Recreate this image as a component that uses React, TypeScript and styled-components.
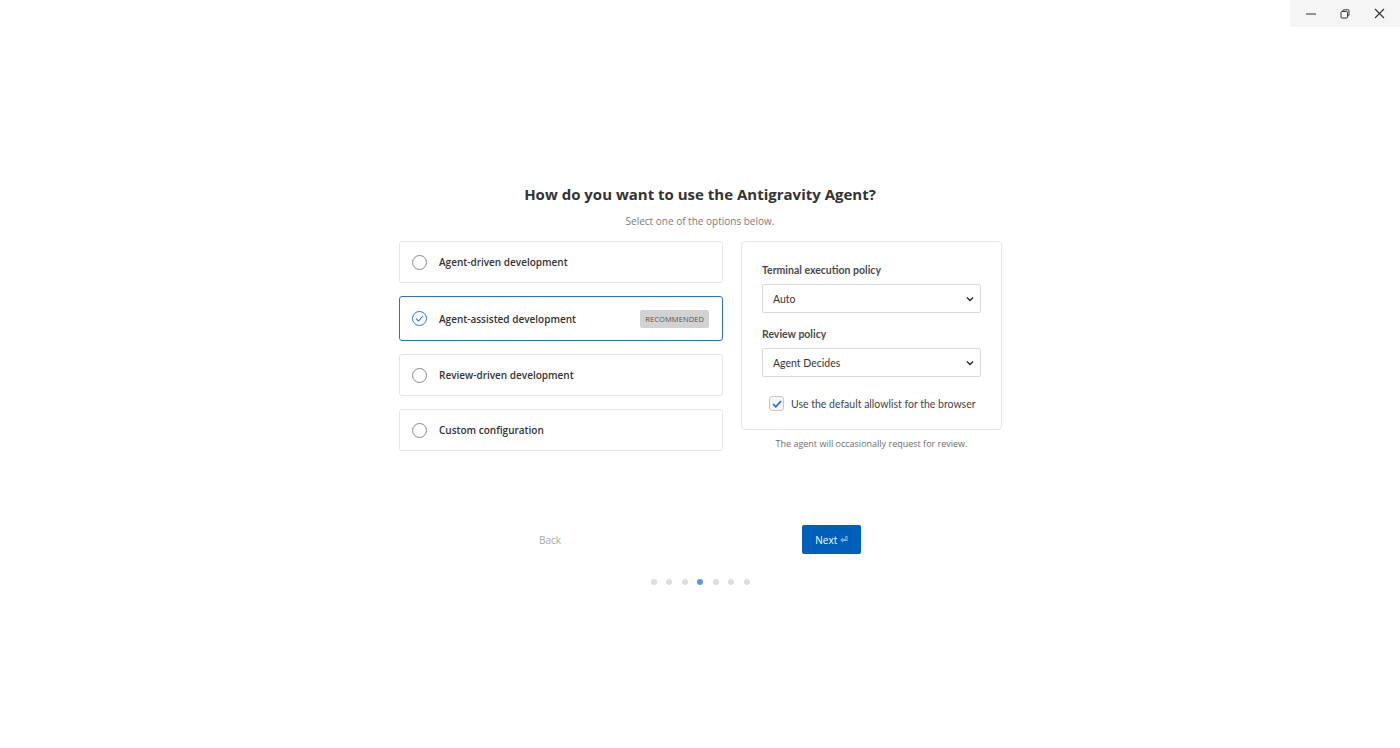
import React, { useState } from "react";
import styled, { createGlobalStyle } from "styled-components";

const GlobalStyle = createGlobalStyle`
  html, body {
    margin: 0;
    padding: 0;
    background: #ffffff;
    font-family: "Open Sans", "Noto Sans", "Liberation Sans", sans-serif;
    color: #333333;
  }
  * { box-sizing: border-box; }
`;

const Page = styled.div`
  width: 1400px;
  height: 748px;
  position: relative;
  overflow: hidden;
  display: flex;
  flex-direction: column;
  align-items: center;
  padding-top: 182px;
`;

// ---- window chrome ----

const WindowControls = styled.div`
  position: absolute;
  top: 0;
  right: 0;
  width: 110px;
  height: 27px;
  background: #f5f5f5;
  display: flex;
  align-items: center;
  justify-content: space-around;
  padding: 0 4px;
`;

const ControlButton = styled.div`
  width: 30px;
  height: 27px;
  display: flex;
  align-items: center;
  justify-content: center;
  color: #333;
`;

// ---- heading ----

const Title = styled.h1`
  margin: 0;
  font-size: 15px;
  font-weight: 700;
  line-height: 24px;
  color: #333333;
`;

const Subtitle = styled.div`
  margin-top: 8px;
  font-size: 10px;
  color: #7a7a7a;
  line-height: 14px;
`;

const Columns = styled.div`
  margin-top: 13px;
  display: flex;
  gap: 18px;
  align-items: flex-start;
  margin-left: 1px;
`;

const OptionList = styled.div`
  width: 324px;
  display: flex;
  flex-direction: column;
  gap: 13px;
`;

const OptionCard = styled.div<{ $selected?: boolean }>`
  height: ${(p) => (p.$selected ? "45px" : "42px")};
  border: 1px solid ${(p) => (p.$selected ? "#2f74c0" : "#e6e6e6")};
  border-radius: 3px;
  background: #fff;
  display: flex;
  align-items: center;
  padding: 0 13px 0 12px;
  cursor: pointer;
`;

const Radio = styled.div<{ $selected?: boolean }>`
  width: 15px;
  height: 15px;
  border-radius: 50%;
  border: 1px solid ${(p) => (p.$selected ? "#2f74c0" : "#8a8a8a")};
  display: flex;
  align-items: center;
  justify-content: center;
  flex-shrink: 0;
`;

const OptionLabel = styled.span`
  margin-left: 12px;
  font-size: 10px;
  font-weight: 600;
  color: #333;
  flex: 1;
`;

const Badge = styled.span`
  background: #d2d2d2;
  color: #555;
  font-size: 7.5px;
  font-weight: 500;
  letter-spacing: 0.1px;
  height: 18px;
  padding: 0 5px;
  display: flex;
  align-items: center;
  border-radius: 2px;
`;

// ---- settings panel ----

const SettingsColumn = styled.div`
  width: 261px;
  display: flex;
  flex-direction: column;
  align-items: center;
`;

const SettingsCard = styled.div`
  width: 100%;
  height: 189px;
  border: 1px solid #e6e6e6;
  border-radius: 4px;
  padding: 21px 20px 0 20px;
  font-family: Lato, "Open Sans", sans-serif;
`;

const FieldLabel = styled.div`
  font-size: 10.5px;
  font-weight: 700;
  color: #4a4a4a;
  line-height: 14px;
  margin-bottom: 7px;
`;

const Select = styled.div<{ $gap?: number }>`
  height: 29px;
  border: 1px solid #d9d9d9;
  border-radius: 2px;
  display: flex;
  align-items: center;
  justify-content: space-between;
  padding: 0 6px 0 10px;
  font-size: 10.5px;
  color: #333;
  margin-bottom: ${(p) => p.$gap ?? 0}px;
`;

const CheckRow = styled.label`
  display: flex;
  align-items: center;
  gap: 7px;
  margin-top: 19px;
  padding-left: 7px;
  font-size: 10.5px;
  color: #444;
`;

const CheckBox = styled.span`
  width: 15px;
  height: 15px;
  border: 1px solid #c8c8c8;
  border-radius: 3px;
  background: #f7f7f7;
  display: flex;
  align-items: center;
  justify-content: center;
`;

const Caption = styled.div`
  margin-top: 8px;
  font-size: 9px;
  color: #6e6e6e;
  line-height: 12px;
`;

// ---- footer ----

const NavRow = styled.div`
  margin-top: 74px;
  display: flex;
  align-items: center;
  gap: 223px;
  margin-right: 18px;
`;

const BackButton = styled.button`
  width: 58px;
  height: 28px;
  border: none;
  background: transparent;
  color: #a8a8a8;
  font-family: inherit;
  font-size: 10px;
`;

const NextButton = styled.button`
  width: 59px;
  height: 29px;
  border: none;
  border-radius: 2px;
  background: #005fb8;
  color: #fff;
  font-family: inherit;
  font-size: 10px;
  font-weight: 500;
  display: flex;
  align-items: center;
  justify-content: center;
  gap: 3px;
`;

const EnterGlyph = styled.span`
  font-size: 9px;
  font-family: "DejaVu Sans", sans-serif;
  opacity: 0.85;
`;

const Dots = styled.div`
  margin-top: 25px;
  display: flex;
  gap: 9.5px;
`;

const Dot = styled.span<{ $active?: boolean }>`
  width: 6px;
  height: 6px;
  border-radius: 50%;
  background: ${(p) => (p.$active ? "#5b9bd5" : "#dedede")};
`;

const options = [
  "Agent-driven development",
  "Agent-assisted development",
  "Review-driven development",
  "Custom configuration",
];

const Chevron = () => (
  <svg width="8" height="6" viewBox="0 0 8 6">
    <path d="M1 1.5 L4 4.5 L7 1.5" fill="none" stroke="#222" strokeWidth="1.4" />
  </svg>
);

export default function App() {
  const [selected, setSelected] = useState(1);
  return (
    <Page>
      <GlobalStyle />
      <WindowControls>
        <ControlButton>
          <svg width="10" height="10" viewBox="0 0 10 10">
            <path d="M0 5 H10" stroke="#333" strokeWidth="1" />
          </svg>
        </ControlButton>
        <ControlButton>
          <svg width="10" height="10" viewBox="0 0 10 10">
            <rect x="1" y="2.5" width="6.5" height="6.5" rx="1" fill="none" stroke="#333" />
            <path d="M3 2.5 V1.5 Q3 0.8 3.8 0.8 H8.2 Q9 0.8 9 1.6 V6 Q9 7 7.5 7" fill="none" stroke="#333" />
          </svg>
        </ControlButton>
        <ControlButton>
          <svg width="11" height="11" viewBox="0 0 11 11">
            <path d="M1 1 L10 10 M10 1 L1 10" stroke="#333" strokeWidth="1.1" />
          </svg>
        </ControlButton>
      </WindowControls>

      <Title>How do you want to use the Antigravity Agent?</Title>
      <Subtitle>Select one of the options below.</Subtitle>

      <Columns>
        <OptionList>
          {options.map((o, i) => (
            <OptionCard key={o} $selected={i === selected} onClick={() => setSelected(i)}>
              <Radio $selected={i === selected}>
                {i === selected && (
                  <svg width="9" height="7" viewBox="0 0 9 7">
                    <path d="M1 3.6 L3.4 6 L8 1" fill="none" stroke="#2f74c0" strokeWidth="1.1" />
                  </svg>
                )}
              </Radio>
              <OptionLabel>{o}</OptionLabel>
              {i === 1 && <Badge>RECOMMENDED</Badge>}
            </OptionCard>
          ))}
        </OptionList>

        <SettingsColumn>
          <SettingsCard>
            <FieldLabel>Terminal execution policy</FieldLabel>
            <Select $gap={14}>
              <span>Auto</span>
              <Chevron />
            </Select>
            <FieldLabel>Review policy</FieldLabel>
            <Select>
              <span>Agent Decides</span>
              <Chevron />
            </Select>
            <CheckRow>
              <CheckBox>
                <svg width="10" height="8" viewBox="0 0 10 8">
                  <path d="M1 4 L3.8 6.8 L9 1" fill="none" stroke="#1f6fc5" strokeWidth="1.7" />
                </svg>
              </CheckBox>
              Use the default allowlist for the browser
            </CheckRow>
          </SettingsCard>
          <Caption>The agent will occasionally request for review.</Caption>
        </SettingsColumn>
      </Columns>

      <NavRow>
        <BackButton>Back</BackButton>
        <NextButton>
          Next <EnterGlyph>⏎</EnterGlyph>
        </NextButton>
      </NavRow>

      <Dots>
        {[0, 1, 2, 3, 4, 5, 6].map((d) => (
          <Dot key={d} $active={d === 3} />
        ))}
      </Dots>
    </Page>
  );
}
